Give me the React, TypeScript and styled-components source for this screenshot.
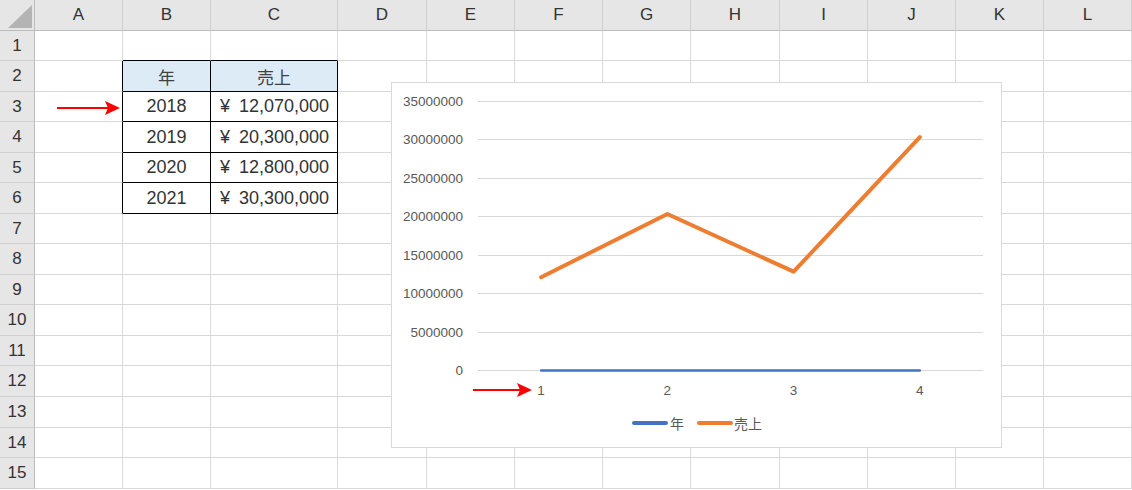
import React from 'react';
import styled, { createGlobalStyle } from 'styled-components';

const COLS = ['A', 'B', 'C', 'D', 'E', 'F', 'G', 'H', 'I', 'J', 'K', 'L'];
const COL_WIDTHS = [88, 88, 127, 89, 88, 88, 88, 89, 88, 88, 88, 88];
const ROW_HEIGHTS = [30, 31, 30, 31, 30, 31, 30, 31, 30, 31, 30, 31, 31, 30, 31];

const SALES = [
    { year: '2018', amount: 12070000 },
    { year: '2019', amount: 20300000 },
    { year: '2020', amount: 12800000 },
    { year: '2021', amount: 30300000 },
];

const GlobalStyle = createGlobalStyle`
    html, body {
        margin: 0;
        padding: 0;
        background: #ffffff;
    }
    body {
        font-family: "Liberation Sans", "Noto Sans CJK JP", sans-serif;
    }
`;

const Wrapper = styled.div`
    position: relative;
    width: 1132px;
    height: 490px;
    overflow: hidden;
    background: #ffffff;
`;

const Sheet = styled.div`
    display: grid;
    grid-template-columns: 35px ${COL_WIDTHS.map((w) => `${w}px`).join(' ')};
    grid-template-rows: 31px ${ROW_HEIGHTS.map((h) => `${h}px`).join(' ')};
`;

const Corner = styled.div`
    position: relative;
    box-sizing: border-box;
    background: #e6e6e6;
    border-right: 1px solid #bdbdbd;
    border-bottom: 1px solid #bdbdbd;
`;

const CornerTriangle = styled.span`
    position: absolute;
    left: 8px;
    top: 5px;
    width: 24px;
    height: 23px;
    background: #b4b4b4;
    clip-path: polygon(100% 0, 100% 100%, 0 100%);
`;

const ColHeader = styled.div`
    box-sizing: border-box;
    display: flex;
    align-items: center;
    justify-content: center;
    background: #e6e6e6;
    border-right: 1px solid #cfcfcf;
    border-bottom: 1px solid #bdbdbd;
    color: #333333;
    font-size: 17px;
`;

const RowHeader = styled.div`
    box-sizing: border-box;
    display: flex;
    align-items: center;
    justify-content: center;
    background: #e6e6e6;
    border-right: 1px solid #bdbdbd;
    border-bottom: 1px solid #cfcfcf;
    color: #333333;
    font-size: 17px;
`;

const Cell = styled.div<{ $rb?: boolean; $bb?: boolean; $fill?: string }>`
    box-sizing: border-box;
    display: flex;
    align-items: center;
    justify-content: center;
    background: ${(p) => p.$fill || '#ffffff'};
    border-right: 1px solid ${(p) => (p.$rb ? '#000000' : '#d9d9d9')};
    border-bottom: 1px solid ${(p) => (p.$bb ? '#000000' : '#d9d9d9')};
    color: #333333;
    font-size: 18px;
    white-space: nowrap;
`;

const HeadText = styled.span`
    color: #404040;
    font-family: "Noto Sans CJK JP", sans-serif;
    font-size: 17px;
`;

const Accounting = styled.span`
    display: flex;
    justify-content: space-between;
    width: 100%;
    padding: 0 8px 0 9px;
    box-sizing: border-box;
`;

const ChartBox = styled.div`
    position: absolute;
    left: 391px;
    top: 82px;
    width: 611px;
    height: 366px;
    box-sizing: border-box;
    background: #ffffff;
    border: 1px solid #d9d9d9;
`;

const ChartSvg = styled.svg`
    display: block;
    font-family: "Liberation Sans", "Noto Sans CJK JP", sans-serif;
`;

const AxisText = styled.text`
    font-size: 13.5px;
    fill: #595959;
`;

const LegendText = styled.text`
    font-family: "Noto Sans CJK JP", sans-serif;
    font-size: 14px;
    fill: #595959;
`;

const ArrowSvg = styled.svg<{ $left: number; $top: number }>`
    position: absolute;
    left: ${(p) => p.$left}px;
    top: ${(p) => p.$top}px;
    overflow: visible;
`;

const formatYen = (n: number) => n.toLocaleString('en-US');

const RedArrow = ({ left, top, length }: { left: number; top: number; length: number }) => (
    <ArrowSvg $left={left} $top={top} width={length + 4} height={16}>
        <line x1={2} y1={8} x2={length - 12} y2={8} stroke='#ff0000' strokeWidth={2} />
        <polygon
            points={`${length - 15},1 ${length},8 ${length - 15},15 ${length - 12},8`}
            fill='#ff0000'
        />
    </ArrowSvg>
);

// chart geometry, in chart-box coordinates
const PLOT_LEFT = 87;
const PLOT_RIGHT = 592;
const Y_ZERO = 288;
const Y_TOP = 19;
const MAX = 35000000;
const STEP = 5000000;
const CAT_W = (PLOT_RIGHT - PLOT_LEFT) / 4;

const yFor = (v: number) => Y_ZERO - (v / MAX) * (Y_ZERO - Y_TOP);
const xFor = (i: number) => PLOT_LEFT + CAT_W * (i + 0.5);

const Chart = () => {
    const ticks = Array.from({ length: 8 }, (_, i) => i * STEP);
    const salesPts = SALES.map((s, i) => `${xFor(i)},${yFor(s.amount)}`).join(' ');
    const yearPts = SALES.map((s, i) => `${xFor(i)},${yFor(Number(s.year)) + 0.5}`).join(' ');

    return (
        <ChartBox>
            <ChartSvg width={609} height={364} viewBox='1 1 609 364'>
                {ticks.map((t) => {
                    const y = Math.round(yFor(t)) + 0.5;
                    return (
                        <g key={t}>
                            <line x1={PLOT_LEFT} y1={y} x2={PLOT_RIGHT} y2={y} stroke='#d9d9d9' strokeWidth={1} />
                            <AxisText x={72} y={y} textAnchor='end' dominantBaseline='central'>
                                {t}
                            </AxisText>
                        </g>
                    );
                })}
                {SALES.map((_, i) => (
                    <AxisText key={i} x={xFor(i)} y={308} textAnchor='middle' dominantBaseline='central'>
                        {i + 1}
                    </AxisText>
                ))}
                <polyline
                    points={yearPts}
                    fill='none'
                    stroke='#4472c4'
                    strokeWidth={2.5}
                    strokeLinecap='round'
                />
                <polyline
                    points={salesPts}
                    fill='none'
                    stroke='#ed7d31'
                    strokeWidth={4}
                    strokeLinecap='round'
                    strokeLinejoin='round'
                />
                <line x1={243} y1={341} x2={275} y2={341} stroke='#4472c4' strokeWidth={4} strokeLinecap='round' />
                <LegendText x={279} y={341} dominantBaseline='central'>年</LegendText>
                <line x1={308} y1={341} x2={340} y2={341} stroke='#ed7d31' strokeWidth={4} strokeLinecap='round' />
                <LegendText x={343} y={341} dominantBaseline='central'>売上</LegendText>
            </ChartSvg>
        </ChartBox>
    );
};

const renderCell = (row: number, col: number) => {
    // table occupies B2:C6 (col 1..2, row 2..6)
    const inTable = row >= 2 && row <= 6 && col >= 1 && col <= 2;
    const leftOfTable = col === 0 && row >= 2 && row <= 6;
    const aboveTable = row === 1 && col >= 1 && col <= 2;
    const key = `${row}-${col}`;

    if (!inTable) {
        return <Cell key={key} $rb={leftOfTable} $bb={aboveTable} />;
    }

    if (row === 2) {
        return (
            <Cell key={key} $rb $bb $fill='#ddebf7'>
                <HeadText>{col === 1 ? '年' : '売上'}</HeadText>
            </Cell>
        );
    }

    const item = SALES[row - 3];
    return (
        <Cell key={key} $rb $bb>
            {col === 1 ? (
                item.year
            ) : (
                <Accounting>
                    <span>¥</span>
                    <span>{formatYen(item.amount)}</span>
                </Accounting>
            )}
        </Cell>
    );
};

const App = () => (
    <>
        <GlobalStyle />
        <Wrapper>
            <Sheet>
                <Corner>
                    <CornerTriangle />
                </Corner>
                {COLS.map((c) => (
                    <ColHeader key={c}>{c}</ColHeader>
                ))}
                {ROW_HEIGHTS.map((_, r) => (
                    <React.Fragment key={r}>
                        <RowHeader>{r + 1}</RowHeader>
                        {COLS.map((_c, ci) => renderCell(r + 1, ci))}
                    </React.Fragment>
                ))}
            </Sheet>
            <Chart />
            <RedArrow left={55} top={100} length={65} />
            <RedArrow left={471} top={382} length={61} />
        </Wrapper>
    </>
);

export default App;
